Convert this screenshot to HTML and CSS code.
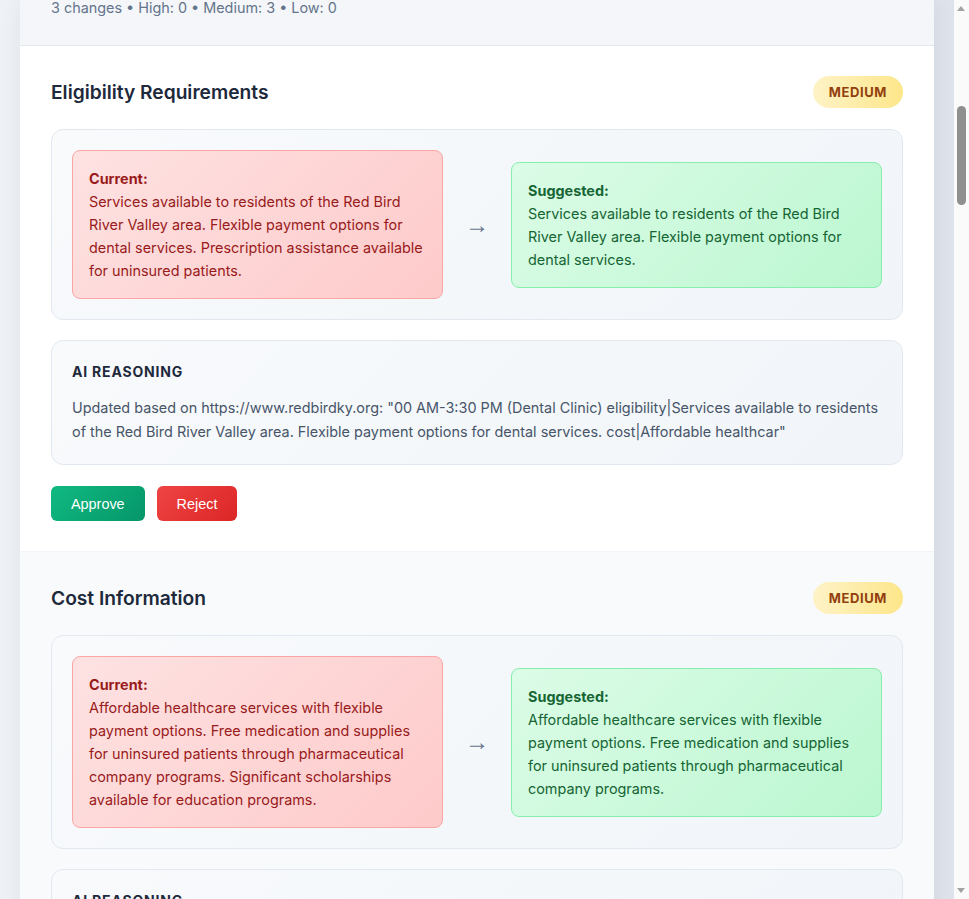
FILE: index.html
```html
<!DOCTYPE html>
<html lang="en">
<head>
<meta charset="utf-8">
<title>Review Changes</title>
<link rel="stylesheet" href="styles.css">
</head>
<body>
<div class="container">
  <div class="summary">3 changes • High: 0 • Medium: 3 • Low: 0</div>

  <div class="change">
    <div class="change-head">
      <h2 class="field">Eligibility Requirements</h2>
      <span class="badge">MEDIUM</span>
    </div>
    <div class="diff">
      <div class="val current"><strong>Current:</strong>Services available to residents of the Red Bird River Valley area. Flexible payment options for dental services. Prescription assistance available for uninsured patients.</div>
      <div class="arrow">→</div>
      <div class="val suggested"><strong>Suggested:</strong>Services available to residents of the Red Bird River Valley area. Flexible payment options for dental services.</div>
    </div>
    <div class="reason">
      <div class="reason-title">AI REASONING</div>
      <p class="reason-text">Updated based on https://www.redbirdky.org: "00 AM-3:30 PM (Dental Clinic) eligibility|Services available to residents of the Red Bird River Valley area. Flexible payment options for dental services. cost|Affordable healthcar"</p>
    </div>
    <div class="actions">
      <button class="btn approve">Approve</button>
      <button class="btn reject">Reject</button>
    </div>
  </div>

  <div class="change alt">
    <div class="change-head">
      <h2 class="field">Cost Information</h2>
      <span class="badge">MEDIUM</span>
    </div>
    <div class="diff">
      <div class="val current"><strong>Current:</strong>Affordable healthcare services with flexible payment options. Free medication and supplies for uninsured patients through pharmaceutical company programs. Significant scholarships available for education programs.</div>
      <div class="arrow">→</div>
      <div class="val suggested"><strong>Suggested:</strong>Affordable healthcare services with flexible payment options. Free medication and supplies for uninsured patients through pharmaceutical company programs.</div>
    </div>
    <div class="reason">
      <div class="reason-title">AI REASONING</div>
      <p class="reason-text">Updated based on https://www.redbirdky.org: "cost|Affordable healthcare services with flexible payment options. Free medication and supplies for uninsured patients through pharmaceutical company programs."</p>
    </div>
    <div class="actions">
      <button class="btn approve">Approve</button>
      <button class="btn reject">Reject</button>
    </div>
  </div>
</div>

<div class="scrollbar" aria-hidden="true">
  <div class="sb-up"></div>
  <div class="sb-thumb"></div>
  <div class="sb-down"></div>
</div>
</body>
</html>
```

FILE: styles.css
```css
body {
  margin: 0;
  padding: 0 35px 0 20px;
  background: linear-gradient(90deg, #eef1f5 0%, #e4e8ef 50%, #dde2eb 100%);
  font-family: Inter, "Noto Sans", "DejaVu Sans", sans-serif;
  color: #1e293b;
}

.container {
  background: #ffffff;
  box-shadow: 0 0 20px rgba(15, 23, 42, 0.06);
}

.summary {
  background: #f4f6fa;
  padding: 0 31px 29px;
  font-size: 14.4px;
  line-height: 16px;
  color: #64748b;
  border-bottom: 1px solid #e2e8f0;
}

.change {
  padding: 30px 31px 30px;
  border-bottom: 1px solid #f1f5f9;
  background: #ffffff;
}

.change.alt {
  background: #f8fafc;
}

.change-head {
  display: flex;
  align-items: center;
  justify-content: space-between;
  margin-bottom: 21px;
}

.field {
  margin: 0;
  font-size: 19.2px;
  font-weight: 600;
  line-height: 32px;
  color: #1e293b;
}

.badge {
  display: inline-block;
  padding: 0 16px;
  height: 32px;
  line-height: 32px;
  border-radius: 16px;
  background: linear-gradient(90deg, #fef3c7, #fde68a);
  color: #92400e;
  font-size: 13px;
  font-weight: 700;
  letter-spacing: 0.6px;
}

.diff {
  display: grid;
  grid-template-columns: 1fr auto 1fr;
  gap: 20px;
  align-items: center;
  padding: 20px;
  background: linear-gradient(135deg, #f8fafc, #f1f5f9);
  border: 1px solid #e2e8f0;
  border-radius: 12px;
}

.val {
  padding: 16px;
  border-radius: 8px;
  font-size: 14.4px;
  line-height: 23px;
}

.val strong {
  display: block;
  font-weight: 700;
}

.current {
  background: linear-gradient(135deg, #fee2e2, #fecaca);
  border: 1px solid #fca5a5;
  color: #991b1b;
}

.suggested {
  background: linear-gradient(135deg, #dcfce7, #bbf7d0);
  border: 1px solid #86efac;
  color: #166534;
}

.arrow {
  width: 28px;
  text-align: center;
  font-family: "Liberation Sans", Arial, sans-serif;
  font-size: 24px;
  line-height: 28px;
  color: #64748b;
}

.reason {
  margin-top: 20px;
  padding: 20px;
  background: linear-gradient(135deg, #f8fafc, #f1f5f9);
  border: 1px solid #e2e8f0;
  border-radius: 12px;
}

.reason-title {
  font-size: 14px;
  font-weight: 700;
  letter-spacing: 0.8px;
  line-height: 22px;
  color: #1e293b;
}

.reason-text {
  margin: 13px 0 0;
  font-size: 14.4px;
  line-height: 24px;
  color: #475569;
}

.actions {
  display: flex;
  gap: 12px;
  margin-top: 21px;
}

.btn {
  border: none;
  border-radius: 6px;
  padding: 0 20px;
  height: 35px;
  font-family: "Liberation Sans", Arial, sans-serif;
  font-size: 14.4px;
  color: #ffffff;
  cursor: pointer;
}

.approve {
  background: linear-gradient(135deg, #10b981, #059669);
}

.reject {
  background: linear-gradient(135deg, #ef4444, #dc2626);
}

.scrollbar {
  position: fixed;
  top: 0;
  right: 0;
  width: 15px;
  height: 100%;
  background: #fafafa;
}

.sb-up,
.sb-down {
  position: absolute;
  left: 3px;
  width: 0;
  height: 0;
  border-left: 4.5px solid transparent;
  border-right: 4.5px solid transparent;
}

.sb-up {
  top: 6px;
  border-bottom: 5px solid #a3a3a3;
}

.sb-down {
  bottom: 6px;
  border-top: 5px solid #a3a3a3;
}

.sb-thumb {
  position: absolute;
  top: 106px;
  left: 3px;
  width: 9px;
  height: 99px;
  border-radius: 5px;
  background: #8f8f8f;
}
```
